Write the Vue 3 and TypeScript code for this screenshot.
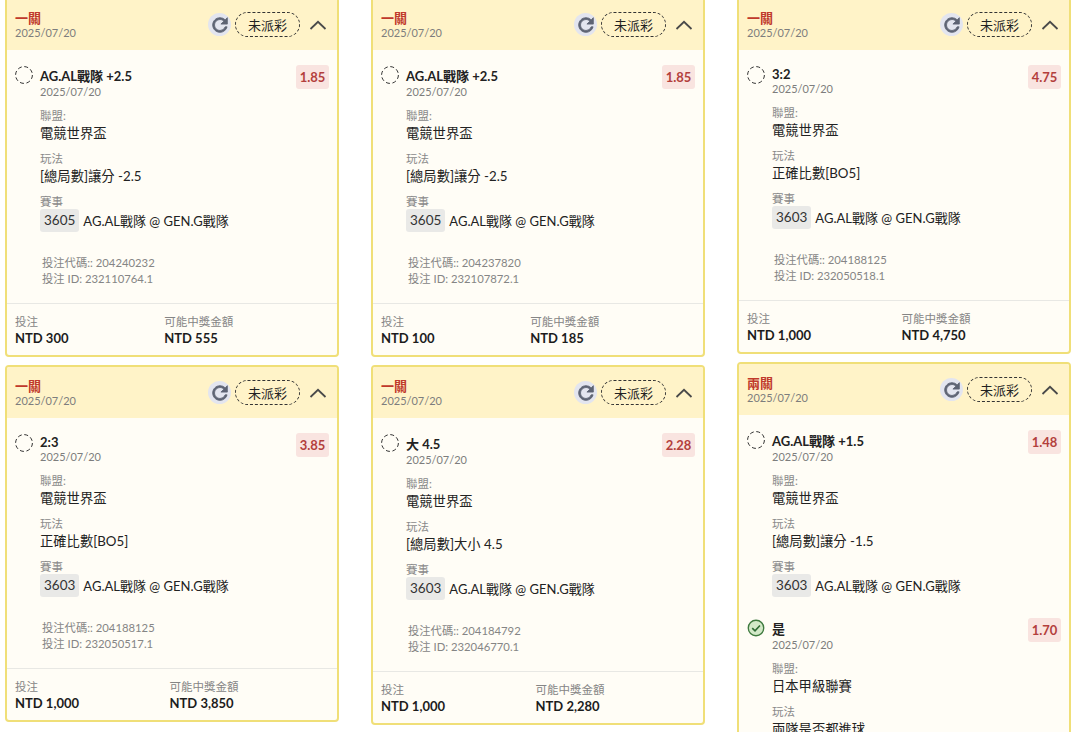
<script setup lang="ts">
interface Sel { name: string; odds: string; league: string; play: string; no: string; won?: boolean }
interface Card { title: string; sels: Sel[]; code?: string; id?: string; stake?: string; win?: string }
const match = 'AG.AL戰隊 @ GEN.G戰隊'
const columns: Card[][] = [
  [
    { title: '一關', sels: [{ name: 'AG.AL戰隊 +2.5', odds: '1.85', league: '電競世界盃', play: '[總局數]讓分 -2.5', no: '3605' }], code: '204240232', id: '232110764.1', stake: 'NTD 300', win: 'NTD 555' },
    { title: '一關', sels: [{ name: '2:3', odds: '3.85', league: '電競世界盃', play: '正確比數[BO5]', no: '3603' }], code: '204188125', id: '232050517.1', stake: 'NTD 1,000', win: 'NTD 3,850' }
  ],
  [
    { title: '一關', sels: [{ name: 'AG.AL戰隊 +2.5', odds: '1.85', league: '電競世界盃', play: '[總局數]讓分 -2.5', no: '3605' }], code: '204237820', id: '232107872.1', stake: 'NTD 100', win: 'NTD 185' },
    { title: '一關', sels: [{ name: '大 4.5', odds: '2.28', league: '電競世界盃', play: '[總局數]大小 4.5', no: '3603' }], code: '204184792', id: '232046770.1', stake: 'NTD 1,000', win: 'NTD 2,280' }
  ],
  [
    { title: '一關', sels: [{ name: '3:2', odds: '4.75', league: '電競世界盃', play: '正確比數[BO5]', no: '3603' }], code: '204188125', id: '232050518.1', stake: 'NTD 1,000', win: 'NTD 4,750' },
    { title: '兩關', sels: [
      { name: 'AG.AL戰隊 +1.5', odds: '1.48', league: '電競世界盃', play: '[總局數]讓分 -1.5', no: '3603' },
      { name: '是', odds: '1.70', league: '日本甲級聯賽', play: '兩隊是否都進球', no: '', won: true }
    ] }
  ]
]
</script>

<template>
  <div class="page">
    <div v-for="(col, ci) in columns" :key="ci" class="col">
      <section v-for="(card, i) in col" :key="i" class="card">
        <header class="head">
          <div class="head-text">
            <strong class="title">{{ card.title }}</strong>
            <span class="date">2025/07/20</span>
          </div>
          <span class="refresh">
            <svg viewBox="0 0 24 24" width="22" height="22"><path fill="#5d6373" stroke="#5d6373" stroke-width="0.9" d="M17.65 6.35A7.958 7.958 0 0 0 12 4c-4.42 0-7.99 3.58-7.99 8s3.57 8 7.99 8c3.73 0 6.84-2.55 7.73-6h-2.08A5.99 5.99 0 0 1 12 18c-3.31 0-6-2.69-6-6s2.69-6 6-6c1.66 0 3.14.69 4.22 1.78L13 11h7V4l-2.35 2.35z"/></svg>
          </span>
          <span class="pill">未派彩</span>
          <svg class="chev" viewBox="0 0 18 10" width="18" height="10"><path d="M1.5 9 9 1.8 16.5 9" fill="none" stroke="#4a4a4a" stroke-width="1.8"/></svg>
        </header>
        <div class="body">
          <div v-for="(s, si) in card.sels" :key="si" class="sel">
            <svg v-if="s.won" class="mark" viewBox="0 0 20 20" width="18" height="18"><circle cx="10" cy="10" r="8.6" fill="#d3e9c8" stroke="#3f7a3f" stroke-width="1.5"/><path d="M5.8 10.2 8.9 13.2 14.4 7.2" fill="none" stroke="#2f6b34" stroke-width="1.8"/></svg>
            <svg v-else class="mark" viewBox="0 0 18 18" width="18" height="18"><circle cx="9" cy="9" r="8.4" fill="none" stroke="#333" stroke-width="1" stroke-dasharray="4 2.6"/></svg>
            <div class="sel-main">
              <div class="sel-top">
                <strong class="name">{{ s.name }}</strong>
                <span class="odds">{{ s.odds }}</span>
              </div>
              <span class="date sel-date">2025/07/20</span>
              <span class="label">聯盟:</span>
              <span class="value">{{ s.league }}</span>
              <span class="label">玩法</span>
              <span class="value">{{ s.play }}</span>
              <template v-if="s.no">
                <span class="label">賽事</span>
                <div class="match"><span class="no">{{ s.no }}</span><span class="vs">{{ match }}</span></div>
              </template>
            </div>
          </div>
          <div v-if="card.code" class="codes">
            <span>投注代碼:: {{ card.code }}</span>
            <span>投注 ID: {{ card.id }}</span>
          </div>
        </div>
        <footer v-if="card.stake" class="foot">
          <div class="foot-item"><span class="foot-label">投注</span><strong class="foot-val">{{ card.stake }}</strong></div>
          <div class="foot-item"><span class="foot-label">可能中獎金額</span><strong class="foot-val">{{ card.win }}</strong></div>
        </footer>
      </section>
    </div>
  </div>
</template>

<style>
html, body { margin: 0; height: 732px; overflow: hidden; background: #fff; }
</style>

<style scoped>
.page {
  display: flex;
  gap: 32px;
  padding-left: 5px;
  margin-top: -3px;
  align-items: flex-start;
  font-family: Lato, "Noto Sans CJK TC", sans-serif;
  color: #222;
}
.col { width: 334px; display: flex; flex-direction: column; gap: 8px; flex: none; }
.card {
  border: 2px solid #f0df78;
  border-radius: 4px;
  background: #fffdf6;
  overflow: hidden;
}
.head {
  display: flex;
  align-items: center;
  height: 51px;
  padding: 0 10px 0 8px;
  background: #fff3c8;
}
.head-text { flex: 1; display: flex; flex-direction: column; padding-top: 1px; }
.title { font-size: 13px; color: #c0392b; font-weight: 700; line-height: 16px; }
.date { font-size: 11px; color: #7d7d7d; line-height: 14px; display: block; }
.refresh {
  width: 23px; height: 23px; border-radius: 50%;
  background: #e3e5ef;
  display: flex; align-items: center; justify-content: center;
  margin-right: 4px;
}
.pill {
  width: 65px; height: 25px; box-sizing: border-box;
  border: 1px dashed #333;
  border-radius: 13px;
  font-size: 13px;
  display: flex; align-items: center; justify-content: center;
  margin-right: 9px;
}
.chev { flex: none; }
.body { padding: 15px 8px 16px 8px; }
.sel { display: flex; gap: 7px; margin-bottom: 21px; }
.sel:last-of-type { margin-bottom: 0; }
.mark { flex: none; width: 18px; height: 18px; box-sizing: border-box; margin-top: 1px; }
.sel-main { flex: 1; min-width: 0; display: flex; flex-direction: column; align-items: flex-start; }
.sel-top { align-self: stretch; display: flex; justify-content: space-between; align-items: flex-start; }
.name { font-size: 13px; font-weight: 700; color: #222; margin-top: 1px; }
.odds {
  background: #f9e4e0; color: #b33f3c; font-weight: 700; font-size: 13px;
  border-radius: 3px; width: 33px; height: 24px; margin-bottom: -10px;
  display: flex; align-items: center; justify-content: center;
}
.label { font-size: 11.5px; color: #8a8a8a; margin-top: 9px; line-height: 15px; }
.value { font-size: 13.3px; color: #222; }
.match { display: flex; align-items: center; }
.no {
  background: #e9e9e7; border-radius: 3px; padding: 0 4px;
  font-size: 13.5px; line-height: 23px; color: #333; margin-right: 4px;
}
.vs { font-size: 13px; color: #222; }
.codes {
  margin: 23px 0 0 27px;
  display: flex; flex-direction: column;
  font-size: 11.3px; color: #858585; line-height: 16px;
}
.foot { display: flex; border-top: 1px solid #e8e8e4; padding: 10px 8px 9px; }
.foot-item { flex: 1 1 auto; display: flex; flex-direction: column; }
.foot-label { font-size: 11.5px; color: #858585; line-height: 16px; }
.foot-val { font-size: 13px; font-weight: 700; color: #1c1c1c; }
</style>
